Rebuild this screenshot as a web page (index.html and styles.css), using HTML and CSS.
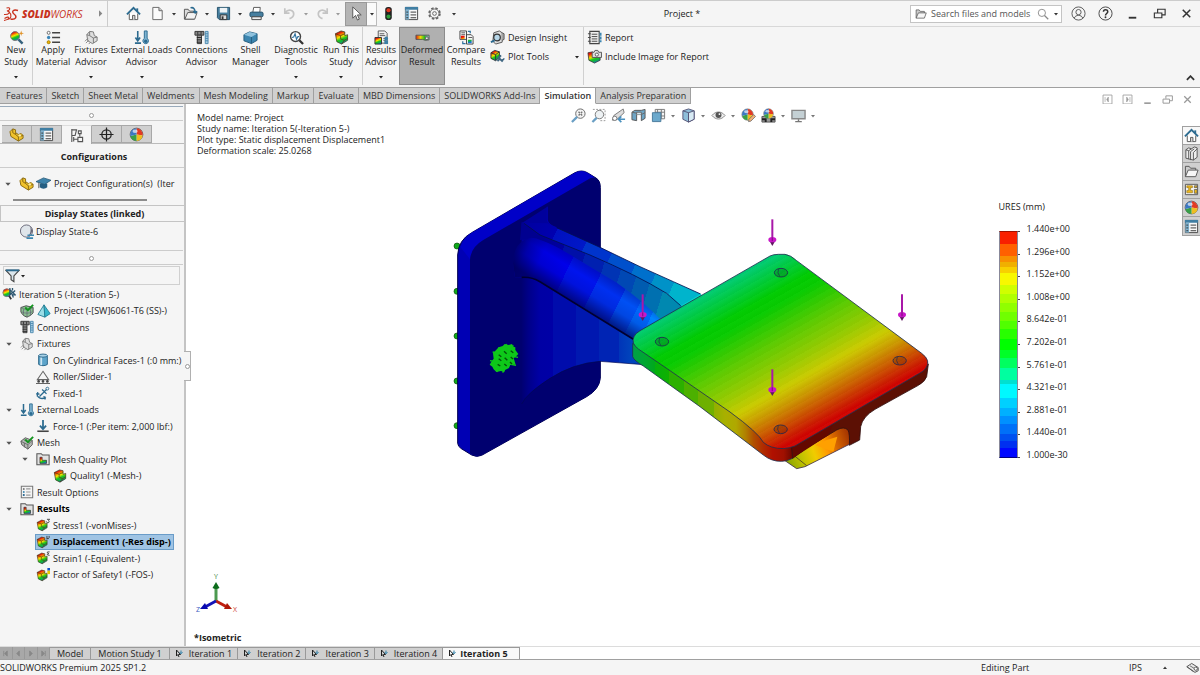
FILE: index.html
```html
<!DOCTYPE html>
<html lang="en">
<head>
<meta charset="utf-8">
<title>Project - SOLIDWORKS</title>
<link rel="stylesheet" href="styles.css">
</head>
<body>
<svg class="defs" aria-hidden="true">
  <defs>
    <linearGradient id="rain" x1=".2" y1="0" x2=".6" y2="1"><stop offset=".15" stop-color="#e8140c"/><stop offset=".32" stop-color="#f58a00"/><stop offset=".46" stop-color="#f2e600"/><stop offset=".66" stop-color="#18c420"/><stop offset=".82" stop-color="#10b048"/><stop offset="1" stop-color="#1470d8"/></linearGradient>
    <linearGradient id="rainx"><stop offset="0" stop-color="#e81c10"/><stop offset=".35" stop-color="#f2d600"/><stop offset=".65" stop-color="#2cc420"/><stop offset="1" stop-color="#9cd8e8"/></linearGradient>
    <symbol id="caret" viewBox="0 0 6 6"><path d="M1 2h4L3 4.400z" fill="currentColor"/></symbol>
    <symbol id="home" viewBox="0 0 16 16"><path d="M3.500 8v6.500h9V8" fill="#fff" stroke="#555"/><path d="M7 14.500V10h2.500v4.500" fill="#ddd" stroke="#555"/><path d="M1 9l7-7 7 7" fill="none" stroke="#2b6a8f" stroke-width="2"/><path d="M12 2.500v3" stroke="#2b6a8f" stroke-width="2"/></symbol>
    <symbol id="doc" viewBox="0 0 16 16"><path d="M3 1.500h6.500L13 5v9.500H3z" fill="#fbfbfb" stroke="#666"/><path d="M9.500 1.500V5H13" fill="#ccc" stroke="#666"/></symbol>
    <symbol id="open" viewBox="0 0 16 16"><path d="M1.500 14V3.500h4l1.500 2h5V14z" fill="#ddd" stroke="#555"/><path d="M2 14l3-7h10l-2.500 7z" fill="#f3f3f3" stroke="#555"/><path d="M8 2c3-1 5 1 5 5m-2-1.500l2 2 2-2" fill="none" stroke="#2b6a8f" stroke-width="1.600"/></symbol>
    <symbol id="save" viewBox="0 0 16 16"><path d="M1.500 1.500h13v13h-11l-2-2z" fill="#477f9f" stroke="#24506a"/><path d="M4 2h8v5H4z" fill="#eef3f6"/><path d="M4.500 9.500h7v5h-7z" fill="#ddd" stroke="#333"/><path d="M6 11h2v3H6z" fill="#333"/></symbol>
    <symbol id="print" viewBox="0 0 16 16"><path d="M4 7l1-5.500h7L11.500 7" fill="#fff" stroke="#555"/><rect x="1" y="6.500" width="14" height="5" rx="1.500" fill="#477f9f" stroke="#24506a"/><path d="M3 11.500h10v3H3z" fill="#eee" stroke="#444"/></symbol>
    <symbol id="undo" viewBox="0 0 16 16"><path d="M3 2.500v5h5M3.500 7c3-4 9-3 9 1.500 0 2-1.500 4-4.500 5" fill="none" stroke="#c4c4c4" stroke-width="1.800"/></symbol>
    <symbol id="redo" viewBox="0 0 16 16"><path d="M13 2.500v5H8M12.500 7c-3-4-9-3-9 1.500 0 2 1.500 4 4.500 5" fill="none" stroke="#c4c4c4" stroke-width="1.800"/></symbol>
    <symbol id="cursor" viewBox="0 0 16 16"><path d="M4 1v12l3-3 2 5 2-1-2-4.500h4z" fill="#fff" stroke="#555"/></symbol>
    <symbol id="traffic" viewBox="0 0 16 16"><rect x="4.500" y="1" width="7" height="14" rx="3" fill="#222"/><circle cx="8" cy="4.500" r="2.200" fill="#e2361c"/><circle cx="8" cy="11.300" r="2.200" fill="#2ca03a"/></symbol>
    <symbol id="props" viewBox="0 0 16 16"><path d="M1.500 1.500h13v13h-13z" fill="#f8f8f8" stroke="#444"/><path d="M1 1h14v3H1z" fill="#3f7ea3"/><path d="M1.500 4h4v10.500h-4z" fill="#7fb2cf"/><path d="M2.500 6.500h2m-2 3h2m-2 3h2m2.500-6h6m-6 3h6m-6 3h6" stroke="#333"/></symbol>
    <symbol id="gear" viewBox="0 0 16 16"><circle cx="8" cy="8" r="5.800" fill="none" stroke="#666" stroke-width="1.800" stroke-dasharray="2.600 2"/><circle cx="8" cy="8" r="4.800" fill="#f5f5f5" stroke="#666"/><circle cx="8" cy="8" r="2" fill="none" stroke="#666"/></symbol>
    <symbol id="mag" viewBox="0 0 16 16"><circle cx="6.500" cy="6.500" r="4.800" fill="none" stroke="#888" stroke-width="1.200"/><path d="M10 10L15 15" stroke="#888" stroke-width="1.600"/></symbol>
    <symbol id="user" viewBox="0 0 16 16"><circle cx="8" cy="8" r="7" fill="none" stroke="#555"/><circle cx="8" cy="6.500" r="2.800" fill="none" stroke="#555"/><path d="M3.500 13c1-4 8-4 9 0" fill="none" stroke="#555"/></symbol>
    <symbol id="help" viewBox="0 0 16 16"><circle cx="8" cy="8" r="7" fill="none" stroke="#444"/><path d="M5.800 6.200c0-3 4.600-3 4.600-.200C10.400 8 8 8 8 10" fill="none" stroke="#333" stroke-width="1.600"/><circle cx="8" cy="12" r="1" fill="#333"/></symbol>
    <symbol id="min" viewBox="0 0 16 16"><path d="M4 12.500h8" stroke="currentColor" stroke-width="2"/></symbol>
    <symbol id="restore" viewBox="0 0 16 16"><path d="M2.500 7.500h8v5h-8zM6 7V3.500h8v6h-3" fill="none" stroke="currentColor" stroke-width="1.200"/></symbol>
    <symbol id="close" viewBox="0 0 16 16"><path d="M4 4l8 8m0-8l-8 8" stroke="currentColor" stroke-width="1.600"/></symbol>
    <symbol id="paneL" viewBox="0 0 16 16"><path d="M2.500 2.500h11v11h-11z" fill="none" stroke="currentColor"/><path d="M5 5v6m4-6v6L7 8z" stroke="currentColor" fill="currentColor" stroke-width=".8"/></symbol>
    <symbol id="paneR" viewBox="0 0 16 16"><path d="M2.500 2.500h11v11h-11z" fill="none" stroke="currentColor"/><path d="M11 5v6M7 5v6l2-3z" stroke="currentColor" fill="currentColor" stroke-width=".8"/></symbol>
    <symbol id="folder" viewBox="0 0 16 16"><path d="M1.500 13.500v-11h4l1.500 2h5.500v2.500" fill="#ccc" stroke="#555"/><path d="M1.500 13.500l3-7h10.500l-2.500 7z" fill="#f6f6f6" stroke="#555"/></symbol>
    <symbol id="study" viewBox="0 0 16 16"><circle cx="6.500" cy="6.500" r="4.800" fill="url(#rain)" stroke="#777"/><path d="M10 10l4.500 4.500" stroke="#35617c" stroke-width="2.600"/><path d="M13 .500l.7 2.300 2.300.7-2.300.7-.7 2.300-.7-2.300-2.300-.7 2.300-.7z" fill="#e0932a"/></symbol>
    <symbol id="studytree" viewBox="0 0 16 16"><circle cx="5.500" cy="6.500" r="4.500" fill="url(#rain)" stroke="#777"/><path d="M8 10l2.500 4" stroke="#333" stroke-width="2"/><path d="M9 1v8l2-2 2 5M9 3l6 6h-4M12 1v3M15 4l-2 2" fill="none" stroke="#2b5570" stroke-width="1.500"/></symbol>
    <symbol id="material" viewBox="0 0 16 16"><path d="M6.500 3h8.500M6.500 8h8.500M6.500 13h8.500" stroke="#444" stroke-width="1.500"/><circle cx="2.800" cy="3" r="1.600" fill="#fff" stroke="#666"/><circle cx="2.800" cy="8" r="1.800" fill="#3b86b8"/><circle cx="2.800" cy="13" r="1.600" fill="#f0b800" stroke="#a67c00"/></symbol>
    <symbol id="fixture" viewBox="0 0 16 16"><path d="M3 5l3-3.500 4 .500 1 4 3 1.500v4l-5 3-5-3z" fill="#dedede" stroke="#777"/><path d="M6 2v4l4 2.500 4-1M6 6L3 5m7 3.500V14" fill="none" stroke="#777"/><path d="M1 12l3-3m-2 5l3-3m0 4l2-2" stroke="#888"/></symbol>
    <symbol id="loads" viewBox="0 0 16 16"><path d="M4 1v10M1.500 8L4 11.500 6.500 8M1 14h6.500" fill="none" stroke="#2b6a8f" stroke-width="1.700"/><path d="M11 1h3v8a3 3 0 11-3 0z" fill="#7fb4d2" stroke="#2b6a8f"/><circle cx="12.500" cy="12" r="1.800" fill="#2b6a8f"/></symbol>
    <symbol id="bolt" viewBox="0 0 16 16"><path d="M1 1.500h9.500v4H1z" fill="#888" stroke="#333"/><path d="M4 2v3m3.500-3v3" stroke="#333"/><path d="M3.500 5.500h4.500v9H3.500z" fill="#999" stroke="#333"/><path d="M3 8h5m-5 2.500h5m-5 2.500h5" stroke="#222"/><path d="M12 1.500h3v13h-3zM12 4h3m-3 2.500h3M12 9h3m-3 2.500h3" fill="#a9cfe4" stroke="#4a88ae"/></symbol>
    <symbol id="shell" viewBox="0 0 16 16"><path d="M1 5l6-3 8 2v7l-6 3.500-8-3z" fill="#3c86b0" stroke="#245b7c"/><path d="M1 5l8 2.500L15 4 7 2z" fill="#8fc2de"/><path d="M9 7.500v7" stroke="#245b7c"/></symbol>
    <symbol id="diag" viewBox="0 0 16 16"><circle cx="7" cy="7" r="5.300" fill="#fff" stroke="#444" stroke-width="1.500"/><path d="M3 8l2-.500L6.500 4 8 10l1.500-3H11" fill="none" stroke="#3173a0" stroke-width="1.200"/><path d="M11 11l4 4" stroke="#333" stroke-width="2.400"/></symbol>
    <symbol id="cube" viewBox="0 0 16 16"><path d="M1.500 4l6-3 4 1v4l3-1v6l-6.500 4L3 12.500z" fill="url(#rain)" stroke="#3a3a1a" stroke-width=".8"/><path d="M1.500 4l5.500 2 4.500-2M7 6v3.500l4 1.500 3.500-2M11 11l-3 4" fill="none" stroke="#5a3a10" stroke-width=".8"/></symbol>
    <symbol id="resadv" viewBox="0 0 16 16"><path d="M4.500 1h7L14 3.500V14H4.500z" fill="#f2f2f2" stroke="#555"/><path d="M6 4h5M6 6h6M10 9h3m-3 2h3" stroke="#555"/><path d="M1 8h7v7H1z" fill="url(#rain)" stroke="#333"/><circle cx="13" cy="9" r="2" fill="#3c7fa5"/><path d="M11 15v-4h4v4z" fill="#3c7fa5"/></symbol>
    <symbol id="deformed" viewBox="0 0 16 16"><path d="M1 5.500h14v5l-4 .500-3-1-7 0z" fill="url(#rainx)" stroke="#555"/><path d="M11 7.500h3v2.500h-3z" fill="#fff" stroke="#555"/></symbol>
    <symbol id="compare" viewBox="0 0 16 16"><path d="M1 1h7v9H1zM8 5h5l2 2v8H8z" fill="#f6f6f6" stroke="#444"/><path d="M2.500 3h4m-4 2h4M10 8h4" stroke="#555"/><path d="M2 6h4v3.500H2zM9.500 10.500h4v3.500h-4z" fill="url(#rain)"/><path d="M4 12v2.500h3M12 3.500V1.500H9.500" fill="none" stroke="#3173a0" stroke-width="1.300"/></symbol>
    <symbol id="insight" viewBox="0 0 16 16"><path d="M4 3l6-2 3 2v10l-7 2-3-3z" fill="#ddd" stroke="#555"/><circle cx="7.500" cy="8" r="3.500" fill="#b6d6e8" stroke="#333" stroke-width="1.300"/><path d="M1 13l4-2" stroke="#2b6a8f" stroke-width="2"/><path d="M13 3l2 1v6l-2 1" fill="#aaa" stroke="#555"/></symbol>
    <symbol id="plottools" viewBox="0 0 16 16"><path d="M1 4l4-2.500 5 1.500v6l-4 3.500-5-2.500z" fill="url(#rain)" stroke="#333"/><path d="M1 4l5 2 4-3M6 6v6" fill="none" stroke="#333"/><path d="M8.500 8.500l5 5M12 7a2.500 2.500 0 103 3M8 13l3-3" fill="none" stroke="#3d6580" stroke-width="1.800"/></symbol>
    <symbol id="report" viewBox="0 0 16 16"><path d="M3 1.500h10v13H3z" fill="#eee" stroke="#444" stroke-width="1.200"/><path d="M5 4.500h6M5 7h6M5 9.500h6M5 12h6M1 4h3M1 8h3m-3 4h3" stroke="#444"/><path d="M14.500 3v3m0 1v3m0 1v2" stroke="#3c86b0" stroke-width="2"/></symbol>
    <symbol id="include" viewBox="0 0 16 16"><path d="M1 4l5-1v5l8 1v3l-6 3-6-3z" fill="url(#rain)" stroke="#333" stroke-width=".8"/><path d="M5.500 3.500h2l1-2h3l1 2h3v5.500h-10z" fill="#ddd" stroke="#555"/><circle cx="10.500" cy="6" r="1.700" fill="#fff" stroke="#555"/></symbol>
    <symbol id="zoomfit" viewBox="0 0 16 16"><circle cx="10" cy="6" r="5" fill="#f4f4f4" stroke="#666"/><path d="M8 4l4 4m0-4L8 8" stroke="#777" stroke-width="1.500" stroke-dasharray="2 1.500"/><path d="M6.500 9.500L1 15" stroke="#6a9fc4" stroke-width="2.400"/></symbol>
    <symbol id="zoomarea" viewBox="0 0 16 16"><path d="M2 1.500h13v12H9" fill="none" stroke="#999" stroke-dasharray="2 1.500"/><circle cx="9" cy="7" r="4.500" fill="#eef2f4" stroke="#777"/><path d="M6 10.500L1.500 15" stroke="#6a9fc4" stroke-width="2.400"/></symbol>
    <symbol id="prevview" viewBox="0 0 16 16"><path d="M13 1L3 8l-1.500 5L6 12.500 14 5z" fill="#ddd" stroke="#777"/><circle cx="4" cy="11" r="2.300" fill="#fff" stroke="#777"/><path d="M15 12H8.500m2.500-3l-3 3 3 3" fill="none" stroke="#4b90bd" stroke-width="1.800"/></symbol>
    <symbol id="section" viewBox="0 0 16 16"><path d="M1 4.500l3-2h7l4-1v9.500l-4 2.500V7H6v6.500l-5-1z" fill="#6fa6c6" stroke="#555"/><path d="M6 7V4.500h5V7m0 0l4-2M1 4.500l5 1" fill="#d8e8f0" stroke="#666"/></symbol>
    <symbol id="orient" viewBox="0 0 16 16"><path d="M4.500 1.500h10v10h-10zM7 1.500v10M11 1.500v10M4.500 4.500h10m-10 4h10" fill="#f4f4f4" stroke="#777"/><path d="M1.500 5h9v9.500h-9z" fill="#6ca9cc" stroke="#47799a"/></symbol>
    <symbol id="style" viewBox="0 0 16 16"><path d="M2 3l6-2 6 2v9l-6 3-6-3z" fill="#8fbfda" stroke="#557"/><path d="M8 5l6-2v9l-6 3z" fill="#d7eaf4" stroke="#557"/><path d="M2 3l6 2v10" fill="none" stroke="#557"/></symbol>
    <symbol id="eye" viewBox="0 0 16 16"><path d="M1 8c4-5 10-5 14 0-4 5-10 5-14 0z" fill="#eee" stroke="#888"/><circle cx="8" cy="7.500" r="3.200" fill="#555"/><circle cx="9" cy="6.500" r="1" fill="#fff"/></symbol>
    <symbol id="ball" viewBox="0 0 16 16"><circle cx="8" cy="8" r="6.800" fill="#eee" stroke="#666"/><path d="M8 8V1.200A6.800 6.800 0 0114.600 9z" fill="#e23a24"/><path d="M8 8l6.600 1A6.800 6.800 0 018 14.800z" fill="#eebd20"/><path d="M8 8v6.800A6.800 6.800 0 011.500 9.500z" fill="#38a048"/><path d="M8 8l-6.500 1.500A6.800 6.800 0 018 1.200z" fill="#3b78c4"/><ellipse cx="6.500" cy="4.500" rx="2.800" ry="1.800" fill="#fff" opacity=".65"/></symbol>
    <symbol id="scene" viewBox="0 0 16 16"><path d="M1 9h14v6H1z" fill="#999" stroke="#555"/><path d="M1 12h4v3m6 0v-3h4" stroke="#222" stroke-width="2" fill="none"/><use href="#ball" x="2" y="0" width="12" height="12"/></symbol>
    <symbol id="appear" viewBox="0 0 16 16"><use href="#ball" x="0" y="0" width="14" height="14"/><path d="M8 14.500l.5-2.500 5-5 2 2-5 5z" fill="#f0b27a" stroke="#666" stroke-width=".8"/></symbol>
    <symbol id="monitor" viewBox="0 0 16 16"><path d="M1 2.500h14v9H1z" fill="#c4d0d4" stroke="#888" stroke-width="1.500"/><path d="M8 12v2M4.500 14.500h7" stroke="#777" stroke-width="1.500"/></symbol>
    <symbol id="part" viewBox="0 0 16 16"><path d="M1 5l3-3 3 1v3l3 2 3-1 2 2v3l-5 3L2 10z" fill="#f0c22c" stroke="#8a6a10"/><path d="M4 2v4l3 2v-2M7 8l3 2.500 5-1.500M10 10.500V15" fill="none" stroke="#8a6a10"/><circle cx="11.500" cy="9" r="1.300" fill="#fff0a0"/></symbol>
    <symbol id="config" viewBox="0 0 16 16"><path d="M3 1v14M3 2h5l-1.500 6H3M10 3h3v3h-3zm1.500 3v3M9.500 10h5v4.500h-5zM5 9.500v5M5 12h4.500" fill="none" stroke="#555" stroke-width="1.200"/></symbol>
    <symbol id="target" viewBox="0 0 16 16"><circle cx="8" cy="8" r="5" fill="none" stroke="#222" stroke-width="1.300"/><path d="M8 .500v15M.500 8h15" stroke="#222" stroke-width="1.300"/></symbol>
    <symbol id="cap" viewBox="0 0 16 16"><path d="M4 8v4c2 2 6 2 8 0V8" fill="#255f83"/><path d="M0 6l8-4 8 2.500L9 9z" fill="#3d83ab" stroke="#235473" stroke-width=".8"/><path d="M3 7v6" stroke="#555"/></symbol>
    <symbol id="dstate" viewBox="0 0 16 16"><circle cx="8" cy="7.500" r="6.500" fill="#dfe5ea" stroke="#667"/><path d="M12 3a6 6 0 01-2 10c2-3 3-6 2-10z" fill="#667"/><path d="M9 12h7M8 15h7" stroke="#3c86b0" stroke-width="1.800"/></symbol>
    <symbol id="funnel" viewBox="0 0 16 16"><path d="M1 2.500h14L9.500 8.500v6l-3-2v-4z" fill="#dbe6ec" stroke="#444" stroke-width="1.200"/><path d="M1 2.500h14" stroke="#2b6a8f" stroke-width="2"/></symbol>
    <symbol id="solid" viewBox="0 0 16 16"><path d="M1 4l6-2 8 2v6c-2 3-5 4-7 5-4-1-6-4-7-6z" fill="#8cbf92" stroke="#444"/><path d="M1 4c5 3 9 3 14 0M4 6v6m4-5v8m4-9v7M2 9c4 2 8 2 12 0" fill="none" stroke="#667" stroke-width=".8"/><path d="M6 4l3 3 6-6" fill="none" stroke="#14931f" stroke-width="2.200"/></symbol>
    <symbol id="tet" viewBox="0 0 16 16"><path d="M8 1L1 12l8 3z" fill="#9adde6" stroke="#237d93"/><path d="M8 1l7 10-6 4z" fill="#36b5ca" stroke="#237d93"/></symbol>
    <symbol id="cyl" viewBox="0 0 16 16"><path d="M3 3v10c2 2 8 2 10 0V3" fill="#5da4ca" stroke="#235f82"/><path d="M5 4v10h2V4z" fill="#cfe6f2"/><ellipse cx="8" cy="3" rx="5" ry="1.800" fill="#a8d2e8" stroke="#235f82"/></symbol>
    <symbol id="roller" viewBox="0 0 16 16"><path d="M8 1.500l6.500 9.500h-13z" fill="#f4f4f4" stroke="#666" stroke-width="1.200"/><circle cx="3" cy="13" r="1.500" fill="#444"/><circle cx="8" cy="13" r="1.500" fill="#444"/><circle cx="13" cy="13" r="1.500" fill="#444"/><path d="M0 15.500h16" stroke="#444"/></symbol>
    <symbol id="anchor" viewBox="0 0 16 16"><path d="M12 4L4 12M7 4l5 5M2 7l-.500 5M1 8c0 5 5 8 10 5m0 0l-2.500-1m2.500 1l-1 2.500M1 8l3 1.500" fill="none" stroke="#2b6a8f" stroke-width="1.500"/><circle cx="13" cy="3" r="1.600" fill="none" stroke="#2b6a8f"/></symbol>
    <symbol id="force" viewBox="0 0 16 16"><path d="M8 1v10M4.500 7.500L8 11.500l3.500-4" fill="none" stroke="#2b6a8f" stroke-width="2"/><path d="M1.500 14h13" stroke="#444" stroke-width="1.800"/></symbol>
    <symbol id="mesh" viewBox="0 0 16 16"><path d="M1 6l5-4 8 3v5l-5 5-7-5z" fill="#b4b8b4" stroke="#555"/><path d="M1 6l8 4 5-5M9 10v5M4 4l7 4M5 8v5" fill="none" stroke="#666"/><path d="M6 4l3 3 6-6" fill="none" stroke="#14931f" stroke-width="2.200"/></symbol>
    <symbol id="fplot" viewBox="0 0 16 16"><path d="M1 14.500V2h5l1.500 1.500H15v11z" fill="#e2e2e2" stroke="#555" stroke-width="1.200"/><path d="M4.500 6h2.500v3.500h5V13H4.500z" fill="url(#rain)" stroke="#333" stroke-width=".8"/></symbol>
    <symbol id="options" viewBox="0 0 16 16"><path d="M1.500 1.500h13v13h-13z" fill="#f4f4f4" stroke="#777" stroke-width="1.200"/><path d="M7 4.500h5M7 8h5m-5 3.500h5" stroke="#999" stroke-width="1.300"/><circle cx="4.300" cy="4.500" r="1.100" fill="#777"/><circle cx="4.300" cy="8" r="1.100" fill="#3c86b0"/><circle cx="4.300" cy="11.500" r="1.200" fill="#1d5f8a"/></symbol>
    <symbol id="library" viewBox="0 0 16 16"><path d="M2 4l3-2 3 1 3-2 3 1v10l-4 3-8-2z" fill="#eee" stroke="#555"/><path d="M2 4l3 1v9M5 5l3-2m-1 3v9M7 6l4-3m-1 4v8M10 7l4-4" fill="none" stroke="#555"/></symbol>
    <symbol id="viewpal" viewBox="0 0 16 16"><path d="M1.500 2.500h13v11h-13z" fill="#f6f6f6" stroke="#555"/><path d="M3 4h6v2H7v3h2v2.500H3V9h2V6H3z" fill="#eeb81c" stroke="#8a6a10" stroke-width=".6"/><path d="M11 8h3v4h-3zM11 4h3v2h-3z" fill="#eeb81c" stroke="#555" stroke-width=".8"/></symbol>
    <symbol id="tabstudy" viewBox="0 0 16 16"><path d="M3 1v12l3-3 2 5M3 1l8 9H7" fill="none" stroke="#222" stroke-width="2"/><path d="M12 2v6M9.500 5.500L12 8.500l3-3" fill="none" stroke="#2b7fa8" stroke-width="2"/></symbol>
    <symbol id="tag" viewBox="0 0 16 16"><path d="M1 7l6-4 8 5v4l-4 2z" fill="#e8e8e8" stroke="#555" stroke-width="1.200"/><path d="M1 7l8 6M5 6l5 3" stroke="#555"/><circle cx="12" cy="9.500" r="2" fill="#fff" stroke="#444"/></symbol>
  </defs>
</svg>

<header class="titlebar">
  <a class="brand" href="#" aria-label="SOLIDWORKS">
    <svg class="ds" viewBox="0 0 32 32" aria-hidden="true"><path d="M7 4c8-2 9 3 1 6 8 0 5 8-6 7" fill="none" stroke="#c8321e" stroke-width="2.200"/><path d="M3 25c10-7 13 1-1 4M12 12c6 5 5 14-3 15" fill="none" stroke="#c8321e" stroke-width="2.200"/><path d="M30 9c-9-3-14 2-8 7 7 5 4 12-7 10" fill="none" stroke="#c8321e" stroke-width="2.800"/></svg>
    <span class="word"><b>SOLID</b>WORKS</span>
  </a>
  <button class="flyout" aria-label="Menu"><svg viewBox="0 0 6 10"><path d="M0 0l5 5-5 5z" fill="#888"/></svg></button>
  <div class="quick">
    <button class="q home" aria-label="Home"><svg class="i"><use href="#home"/></svg></button>
    <button class="q" aria-label="New"><svg class="i"><use href="#doc"/></svg></button><button class="dd" aria-label="New options"><svg><use href="#caret"/></svg></button>
    <button class="q" aria-label="Open"><svg class="i"><use href="#open"/></svg></button><button class="dd" aria-label="Open options"><svg><use href="#caret"/></svg></button>
    <button class="q" aria-label="Save"><svg class="i"><use href="#save"/></svg></button><button class="dd" aria-label="Save options"><svg><use href="#caret"/></svg></button>
    <button class="q" aria-label="Print"><svg class="i"><use href="#print"/></svg></button><button class="dd" aria-label="Print options"><svg><use href="#caret"/></svg></button>
    <button class="q" aria-label="Undo"><svg class="i"><use href="#undo"/></svg></button><button class="dd off" aria-label="Undo options"><svg><use href="#caret"/></svg></button>
    <button class="q" aria-label="Redo"><svg class="i"><use href="#redo"/></svg></button><button class="dd off last" aria-label="Redo options"><svg><use href="#caret"/></svg></button>
    <button class="q pick" aria-label="Select"><svg class="i"><use href="#cursor"/></svg></button><button class="dd boxed" aria-label="Select options"><svg><use href="#caret"/></svg></button>
    <button class="q wide" aria-label="Rebuild"><svg class="i"><use href="#traffic"/></svg></button>
    <button class="q wide" aria-label="File properties"><svg class="i"><use href="#props"/></svg></button>
    <button class="q wide" aria-label="Options"><svg class="i"><use href="#gear"/></svg></button><button class="dd" aria-label="More options"><svg><use href="#caret"/></svg></button>
  </div>
  <h1>Project *</h1>
  <div class="search">
    <svg class="i"><use href="#folder"/></svg>
    <input type="search" aria-label="Search files and models" placeholder="Search files and models">
    <button aria-label="Search"><svg class="i"><use href="#mag"/></svg></button>
    <button class="dd" aria-label="Search options"><svg><use href="#caret"/></svg></button>
  </div>
  <div class="window">
    <button aria-label="Account"><svg><use href="#user"/></svg></button>
    <button aria-label="Help"><svg><use href="#help"/></svg></button>
    <button aria-label="Minimize"><svg><use href="#min"/></svg></button>
    <button aria-label="Restore"><svg><use href="#restore"/></svg></button>
    <button aria-label="Close"><svg><use href="#close"/></svg></button>
  </div>
</header>

<div class="ribbon">
  <button class="cmd sep"><svg class="i"><use href="#study"/></svg><span>New<br>Study</span><svg class="c"><use href="#caret"/></svg></button>
  <button class="cmd"><svg class="i"><use href="#material"/></svg><span>Apply<br>Material</span></button>
  <button class="cmd"><svg class="i"><use href="#fixture"/></svg><span>Fixtures<br>Advisor</span><svg class="c"><use href="#caret"/></svg></button>
  <button class="cmd"><svg class="i"><use href="#loads"/></svg><span>External Loads<br>Advisor</span><svg class="c"><use href="#caret"/></svg></button>
  <button class="cmd"><svg class="i"><use href="#bolt"/></svg><span>Connections<br>Advisor</span><svg class="c"><use href="#caret"/></svg></button>
  <button class="cmd"><svg class="i"><use href="#shell"/></svg><span>Shell<br>Manager</span></button>
  <button class="cmd"><svg class="i"><use href="#diag"/></svg><span>Diagnostic<br>Tools</span><svg class="c"><use href="#caret"/></svg></button>
  <button class="cmd sep"><svg class="i"><use href="#cube"/></svg><span>Run This<br>Study</span><svg class="c"><use href="#caret"/></svg></button>
  <button class="cmd"><svg class="i"><use href="#resadv"/></svg><span>Results<br>Advisor</span><svg class="c"><use href="#caret"/></svg></button>
  <button class="cmd on"><svg class="i"><use href="#deformed"/></svg><span>Deformed<br>Result</span></button>
  <button class="cmd"><svg class="i"><use href="#compare"/></svg><span>Compare<br>Results</span></button>
  <div class="stack sep">
    <button><svg class="i"><use href="#insight"/></svg>Design Insight</button>
    <button><svg class="i"><use href="#plottools"/></svg>Plot Tools<svg class="c"><use href="#caret"/></svg></button>
  </div>
  <div class="stack">
    <button><svg class="i"><use href="#report"/></svg>Report</button>
    <button><svg class="i"><use href="#include"/></svg>Include Image for Report</button>
  </div>
  <button class="fold" aria-label="Collapse ribbon"><svg viewBox="0 0 10 6"><path d="M1 5l4-4 4 4" fill="none" stroke="#333" stroke-width="2"/></svg></button>
</div>

<nav class="tabs">
  <button>Features</button><button>Sketch</button><button>Sheet Metal</button><button>Weldments</button><button>Mesh Modeling</button><button>Markup</button><button>Evaluate</button><button>MBD Dimensions</button><button>SOLIDWORKS Add-Ins</button><button class="on">Simulation</button><button>Analysis Preparation</button>
  <div class="docwin">
    <button aria-label="Expand left"><svg><use href="#paneL"/></svg></button>
    <button aria-label="Expand right"><svg><use href="#paneR"/></svg></button>
    <button aria-label="Minimize document"><svg><use href="#min"/></svg></button>
    <button aria-label="Restore document"><svg><use href="#restore"/></svg></button>
    <button aria-label="Close document"><svg><use href="#close"/></svg></button>
  </div>
</nav>

<main>
  <aside>
    <div class="grip top"><i></i></div>
    <div class="ptabs">
      <button aria-label="Feature tree"><svg class="i"><use href="#part"/></svg></button>
      <button aria-label="Properties"><svg class="i"><use href="#props"/></svg></button>
      <button class="on" aria-label="Configurations"><svg class="i"><use href="#config"/></svg></button>
      <button aria-label="Dimensions"><svg class="i"><use href="#target"/></svg></button>
      <button aria-label="Display manager"><svg class="i"><use href="#ball"/></svg></button>
    </div>
    <h2>Configurations</h2>
    <div class="configrow"><button class="ex" aria-label="Collapse"><svg><use href="#caret"/></svg></button><svg class="i"><use href="#part"/></svg><svg class="i"><use href="#cap"/></svg><span>Project Configuration(s)&nbsp; (Iter</span></div>
    <div class="scroll"></div>
    <h2 class="boxed">Display States (linked)</h2>
    <div class="state"><svg class="i"><use href="#dstate"/></svg>Display State-6</div>
    <div class="grip"><i></i></div>
    <label class="filter"><svg class="i"><use href="#funnel"/></svg><svg class="c"><use href="#caret"/></svg><input type="text" aria-label="Filter"></label>
    <ul class="tree">
      <li class="l0"><span><svg class="i"><use href="#studytree"/></svg>Iteration 5 (-Iteration 5-)</span></li>
      <li class="l1"><span><svg class="i"><use href="#solid"/></svg><svg class="i"><use href="#tet"/></svg>Project (-[SW]6061-T6 (SS)-)</span></li>
      <li class="l1"><span><svg class="i"><use href="#bolt"/></svg>Connections</span></li>
      <li class="l1"><button class="ex" aria-label="Collapse Fixtures"><svg><use href="#caret"/></svg></button><span><svg class="i"><use href="#fixture"/></svg>Fixtures</span></li>
      <li class="l2"><span><svg class="i"><use href="#cyl"/></svg>On Cylindrical Faces-1 (:0 mm:)</span></li>
      <li class="l2"><span><svg class="i"><use href="#roller"/></svg>Roller/Slider-1</span></li>
      <li class="l2"><span><svg class="i"><use href="#anchor"/></svg>Fixed-1</span></li>
      <li class="l1"><button class="ex" aria-label="Collapse External Loads"><svg><use href="#caret"/></svg></button><span><svg class="i"><use href="#loads"/></svg>External Loads</span></li>
      <li class="l2"><span><svg class="i"><use href="#force"/></svg>Force-1 (:Per item: 2,000 lbf:)</span></li>
      <li class="l1"><button class="ex" aria-label="Collapse Mesh"><svg><use href="#caret"/></svg></button><span><svg class="i"><use href="#mesh"/></svg>Mesh</span></li>
      <li class="l2"><button class="ex" aria-label="Collapse Mesh Quality Plot"><svg><use href="#caret"/></svg></button><span><svg class="i"><use href="#fplot"/></svg>Mesh Quality Plot</span></li>
      <li class="l3"><span><svg class="i"><use href="#cube"/></svg>Quality1 (-Mesh-)</span></li>
      <li class="l1"><span><svg class="i"><use href="#options"/></svg>Result Options</span></li>
      <li class="l1 bold"><button class="ex" aria-label="Collapse Results"><svg><use href="#caret"/></svg></button><span><svg class="i"><use href="#fplot"/></svg>Results</span></li>
      <li class="l2"><span><svg class="i" viewBox="0 0 16 16"><use href="#cube" y="1" width="14" height="15"/><path d="M12 4a1.500 1.500 0 102-1.500M12.500 1.500H16" fill="none" stroke="#333"/></svg>Stress1 (-vonMises-)</span></li>
      <li class="l2 bold sel"><span><svg class="i" viewBox="0 0 16 16"><use href="#cube" y="1" width="14" height="15"/><path d="M12.500 1v4m0-1q2 1 2.500-1V1" fill="none" stroke="#333"/></svg>Displacement1 (-Res disp-)</span></li>
      <li class="l2"><span><svg class="i" viewBox="0 0 16 16"><use href="#cube" y="1" width="14" height="15"/><path d="M15.500 1q-5 0-1 2-4 1 1 2" fill="none" stroke="#333"/></svg>Strain1 (-Equivalent-)</span></li>
      <li class="l2"><span><svg class="i" viewBox="0 0 16 16"><use href="#cube" y="1" width="14" height="15"/><path d="M13 0h3v3h-3z" fill="#1450c8"/><path d="M13 3h3v4h-3z" fill="#e8c800"/></svg>Factor of Safety1 (-FOS-)</span></li>
    </ul>
    <button class="flap" aria-label="Hide panel"><i></i></button>
  </aside>

  <section class="view">
    <svg class="model" viewBox="186 104 1014 542" role="img" aria-label="Displacement plot of the bracket">
      <defs>
        <linearGradient id="gTop" gradientUnits="userSpaceOnUse" x1="255" y1="190" x2="760" y2="430">
          <stop offset="0" stop-color="#0000a0"/><stop offset=".17" stop-color="#0000b0"/><stop offset=".17" stop-color="#0010c0"/><stop offset=".34" stop-color="#0018c8"/><stop offset=".34" stop-color="#0034cc"/><stop offset=".49" stop-color="#0034cc"/><stop offset=".49" stop-color="#0050cc"/><stop offset=".63" stop-color="#0050cc"/><stop offset=".63" stop-color="#0070cc"/><stop offset=".75" stop-color="#0070cc"/><stop offset=".75" stop-color="#0092c8"/><stop offset=".86" stop-color="#0092c8"/><stop offset=".86" stop-color="#00b4cc"/></linearGradient>
        <linearGradient id="gSide" gradientUnits="userSpaceOnUse" x1="290" y1="250" x2="720" y2="380">
          <stop offset="0" stop-color="#000090"/><stop offset=".18" stop-color="#0000a0"/><stop offset=".18" stop-color="#0010a8"/><stop offset=".33" stop-color="#0010a8"/><stop offset=".33" stop-color="#0020b0"/><stop offset=".47" stop-color="#0020b0"/><stop offset=".47" stop-color="#0034b4"/><stop offset=".59" stop-color="#0034b4"/><stop offset=".59" stop-color="#0048b4"/><stop offset=".7" stop-color="#0048b4"/><stop offset=".7" stop-color="#005cb0"/><stop offset=".8" stop-color="#005cb0"/><stop offset=".8" stop-color="#0070b0"/><stop offset=".9" stop-color="#0070b0"/><stop offset=".9" stop-color="#0088b0"/></linearGradient>
        <linearGradient id="gTube" gradientUnits="userSpaceOnUse" x1="220" y1="290" x2="650" y2="500">
          <stop offset="0" stop-color="#000080"/><stop offset=".06" stop-color="#0000b0"/><stop offset=".16" stop-color="#0000e0"/><stop offset=".34" stop-color="#0000ec"/><stop offset=".34" stop-color="#0014ee"/><stop offset=".54" stop-color="#0014ee"/><stop offset=".54" stop-color="#0030f0"/><stop offset=".72" stop-color="#0030f0"/><stop offset=".72" stop-color="#0050f4"/><stop offset=".84" stop-color="#0050f4"/><stop offset=".84" stop-color="#0068fa"/><stop offset=".94" stop-color="#0068fa"/><stop offset=".94" stop-color="#0084ff"/></linearGradient>
        <linearGradient id="gShade" gradientUnits="userSpaceOnUse" x1="465" y1="325" x2="400" y2="430"><stop offset="0" stop-color="#000070" stop-opacity=".35"/><stop offset=".3" stop-color="#000060" stop-opacity="0"/><stop offset=".6" stop-color="#000060" stop-opacity=".12"/><stop offset="1" stop-color="#000050" stop-opacity=".75"/></linearGradient>
        <linearGradient id="gWeb" gradientUnits="userSpaceOnUse" x1="243" y1="500" x2="610" y2="500">
          <stop offset="0" stop-color="#00006f"/><stop offset=".06" stop-color="#000088"/><stop offset=".15" stop-color="#0000a4"/><stop offset=".26" stop-color="#0000a6"/><stop offset=".26" stop-color="#000cac"/><stop offset=".45" stop-color="#000cac"/><stop offset=".45" stop-color="#0018b0"/><stop offset=".64" stop-color="#0018b0"/><stop offset=".64" stop-color="#0024b4"/><stop offset=".8" stop-color="#0024b4"/><stop offset=".8" stop-color="#0034b8"/><stop offset=".9" stop-color="#0044bc"/></linearGradient>
        <linearGradient id="gPlate" gradientUnits="userSpaceOnUse" x1="166" y1="297" x2="418" y2="749">
          <stop offset="0" stop-color="#00cc78"/><stop offset=".1" stop-color="#00cc3c"/><stop offset=".2" stop-color="#00cc00"/><stop offset=".27" stop-color="#08cc00"/><stop offset=".45" stop-color="#5ccc00"/><stop offset=".6" stop-color="#98cc00"/><stop offset=".71" stop-color="#cccc00"/><stop offset=".79" stop-color="#cc9c00"/><stop offset=".88" stop-color="#cc5c00"/><stop offset=".96" stop-color="#cc2000"/><stop offset="1" stop-color="#d00400"/></linearGradient>
        <linearGradient id="gBand" gradientUnits="userSpaceOnUse" spreadMethod="repeat" x1="0" y1="0" x2="9" y2="16"><stop offset="0" stop-color="#fff" stop-opacity=".02"/><stop offset="1" stop-color="#000" stop-opacity=".02"/></linearGradient>
        <linearGradient id="gEdge" gradientUnits="userSpaceOnUse" x1="38" y1="0" x2="515" y2="0">
          <stop offset="0" stop-color="#00a048"/><stop offset=".08" stop-color="#00a830"/><stop offset=".14" stop-color="#00a81c"/><stop offset=".14" stop-color="#04b00c"/><stop offset=".23" stop-color="#10b000"/><stop offset=".23" stop-color="#2cb000"/><stop offset=".32" stop-color="#2cb000"/><stop offset=".32" stop-color="#4cb000"/><stop offset=".41" stop-color="#4cb000"/><stop offset=".41" stop-color="#6cb000"/><stop offset=".51" stop-color="#70b000"/><stop offset=".51" stop-color="#90b000"/><stop offset=".58" stop-color="#a8b000"/><stop offset=".65" stop-color="#b0a800"/><stop offset=".71" stop-color="#b08000"/><stop offset=".76" stop-color="#b05000"/><stop offset=".82" stop-color="#b02c00"/><stop offset=".88" stop-color="#b01000"/><stop offset=".95" stop-color="#a01000"/><stop offset="1" stop-color="#700800"/></linearGradient>
        <linearGradient id="gBoss" gradientUnits="userSpaceOnUse" x1="500" y1="740" x2="690" y2="670"><stop offset="0" stop-color="#90a800"/><stop offset=".22" stop-color="#c4c400"/><stop offset=".4" stop-color="#f0cc00"/><stop offset=".6" stop-color="#ff9800"/><stop offset=".74" stop-color="#d86800"/><stop offset="1" stop-color="#a03000"/></linearGradient>
        <g id="load"><path d="M0 0v58" stroke="#a818a8" stroke-width="6"/><path d="M-9 64L0 80 9 64z" fill="#601860"/><ellipse cx="0" cy="61" rx="12" ry="8" fill="#c818c8"/><path d="M0 54v12" stroke="#901090" stroke-width="4"/></g>
        <g id="hole"><ellipse rx="20" ry="13" fill="#000" fill-opacity=".16" stroke="#202850" stroke-width="2.500"/><path d="M-7 -11q-6 11 3 22" fill="none" stroke="#202850" stroke-width="2"/></g>
      </defs>
      <svg x="440" y="160" width="260" height="310" viewBox="0 0 780 930" overflow="visible">
        <g fill="#10a818" stroke="#044a08" stroke-width="2"><circle cx="51" cy="258" r="9"/><circle cx="51" cy="394" r="9"/><circle cx="51" cy="528" r="9"/><circle cx="51" cy="663" r="9"/><circle cx="51" cy="797" r="9"/></g>
        <path d="M53 850V285Q55 240 95 218L405 38Q425 28 442 38L468 54Q481 62 481 82V655Q478 688 440 710L125 886Q110 893 95 885L64 866Q54 860 53 850z" fill="#0000b4" stroke="#000050" stroke-width="3"/>
        <path d="M62 262Q70 232 95 218L405 38Q425 28 442 38L462 50 130 240Q95 262 90 298z" fill="#0000c8"/>
        <path d="M90 880V300Q92 262 130 240L452 54Q480 48 480 82V655Q478 688 440 709L125 885Q108 892 90 880z" fill="#00006f"/>
        <path d="M245 190L322 140V180Q325 195 350 203L300 300 245 260z" fill="#00009c"/>
        <path d="M322 140V180Q325 195 350 203" fill="none" stroke="#0000c0" stroke-width="2"/>
        <path d="M243 350L290 356 590 535V590L612 614 480 604Q400 610 330 655T245 732z" fill="url(#gWeb)"/>
        <path d="M612 614L480 604Q400 610 330 655T245 732" fill="none" stroke="#000850" stroke-width="2"/>
        <path d="M245 185L310 225 450 283 600 350 680 400 740 450 640 510 600 450 450 340 290 235 240 240z" fill="url(#gSide)"/>
        <path d="M252 188L322 190 350 203 480 262 600 320 700 365 782 402 792 420 740 450 722 437 680 400Q590 345 450 285L300 225z" fill="url(#gTop)"/>
        <path d="M350 203L480 262 600 320 700 365 782 402M252 190L300 225 450 285Q590 345 680 400L722 437" fill="none" stroke="#001050" stroke-width="2.500"/>
        <path d="M728 437L782 405 786 412 740 440z" fill="#00e0c8" stroke="#00e0c8" stroke-width="4"/>
        <path d="M219 310Q222 240 275 233 320 240 400 290L530 368Q620 430 672 490L580 540 450 455 290 358Q250 350 225 352z" fill="url(#gTube)"/>
        <path d="M219 310Q222 240 275 233 320 240 400 290L530 368Q620 430 672 490L580 540 450 455 290 358Q250 350 225 352z" fill="url(#gShade)"/>
        <path d="M245 352Q275 350 300 365L580 538" fill="none" stroke="#000030" stroke-width="5"/>
        <path d="M176 562l12 -4 6 -6 12 3 10 -3 4 8 6 2 0 8 9 12 -8 8 -6 4 6 20 -16 0 -4 10 -12 6 -2 6 -10 -3 -14 3 -8 -8 -4 -8 -8 -6 6 -10 6 -8 -2 -16 z" fill="#0ec81a"/>
        <path d="M158 576l76 16M150 602l78 14M170 636l50-80M188 638l30-60M176 562l14 60M198 552l12 60" stroke="#0ec81a" stroke-width="4"/>
        <path d="M176 584l8 6m8-16l8 7m12-9l8 6m-44 18l8 6m10-9l8 8m10-10l7 6m-46 16l8 5m12-6l7 6m10-12l6 6" stroke="#04500a" stroke-width="4"/>
      </svg>
      <svg x="620" y="210" width="320" height="270" viewBox="0 0 960 810" overflow="visible">
        <path d="M495 752L530 776 555 770 690 702V650L600 640z" fill="url(#gBoss)" stroke="#403050" stroke-width="2.500"/>
        <path d="M524 738L560 767" stroke="#504020" stroke-width="2.500"/>
        <path d="M585 705L640 725 652 680 620 690z" fill="#ffa000"/>
        <path d="M38 400V440Q42 452 70 468L240 590 430 735Q455 755 485 754 500 754 518 745V700L300 560z" fill="url(#gEdge)" stroke="#203050" stroke-width="2.500"/>
        <path d="M515 712L925 462 920 500Q915 515 895 526L765 598Q728 620 722 650L719 690 688 706Q690 672 684 660 672 648 650 660L560 714 518 745z" fill="#5c1004" stroke="#301010" stroke-width="2.500"/>
        <path d="M518 712L640 640 625 676 518 745z" fill="#640800"/>
        <path d="M60 362L450 138Q460 133 475 133H495Q512 135 530 152L905 430Q934 452 918 474 912 484 895 492L525 708Q490 722 455 711 440 706 430 697 415 668 330 606L150 482 55 417Q32 400 42 380 46 370 60 362z" fill="url(#gPlate)"/>
        <path d="M60 362L450 138Q460 133 475 133H495Q512 135 530 152L905 430Q934 452 918 474 912 484 895 492L525 708Q490 722 455 711 440 706 430 697 415 668 330 606L150 482 55 417Q32 400 42 380 46 370 60 362z" fill="url(#gBand)" stroke="#203050" stroke-width="2.500"/>
        <use href="#hole" x="483" y="188"/><use href="#hole" x="126" y="395"/><use href="#hole" x="839" y="452"/><use href="#hole" x="482" y="658"/>
        <use href="#load" x="457" y="28"/><use href="#load" x="68" y="253"/><use href="#load" x="846" y="253"/><use href="#load" x="457" y="478"/>
      </svg>
    </svg>

    <div class="hud">
      <button aria-label="Zoom to fit"><svg class="i"><use href="#zoomfit"/></svg></button>
      <button aria-label="Zoom to area"><svg class="i"><use href="#zoomarea"/></svg></button>
      <button aria-label="Previous view"><svg class="i"><use href="#prevview"/></svg></button>
      <button aria-label="Section view"><svg class="i"><use href="#section"/></svg></button>
      <button aria-label="View orientation"><svg class="i"><use href="#orient"/></svg><svg class="c"><use href="#caret"/></svg></button>
      <button aria-label="Display style"><svg class="i"><use href="#style"/></svg><svg class="c"><use href="#caret"/></svg></button>
      <button aria-label="Hide or show items"><svg class="i"><use href="#eye"/></svg><svg class="c"><use href="#caret"/></svg></button>
      <button aria-label="Edit appearance"><svg class="i"><use href="#appear"/></svg></button>
      <button aria-label="Apply scene"><svg class="i"><use href="#scene"/></svg><svg class="c"><use href="#caret"/></svg></button>
      <button aria-label="View settings"><svg class="i"><use href="#monitor"/></svg><svg class="c"><use href="#caret"/></svg></button>
    </div>
    <p class="info">Model name: Project<br>Study name: Iteration 5(-Iteration 5-)<br>Plot type: Static displacement Displacement1<br>Deformation scale: 25.0268</p>
    <div class="legend">
      <h3>URES (mm)</h3>
      <div class="scale">
        <div class="bar"></div>
        <div class="ticks"><i></i><i></i><i></i><i></i><i></i><i></i><i></i><i></i><i></i><i></i><i></i></div>
        <ol><li>1.440e+00</li><li>1.296e+00</li><li>1.152e+00</li><li>1.008e+00</li><li>8.642e-01</li><li>7.202e-01</li><li>5.761e-01</li><li>4.321e-01</li><li>2.881e-01</li><li>1.440e-01</li><li>1.000e-30</li></ol>
      </div>
    </div>
    <div class="orientation">
      <svg viewBox="0 0 48 48" aria-hidden="true">
        <path d="M22 30V16" stroke="#4c9a50" stroke-width="3"/><path d="M18.500 17L22 11l3.500 6q-3.500 2-7 0z" fill="#0c6c1c"/>
        <path d="M22 30l11 6" stroke="#c02010" stroke-width="3"/><path d="M30 38l3-6 5 6z" fill="#b01808"/>
        <path d="M22 30l-11 6" stroke="#1414b8" stroke-width="3"/><path d="M14 38l-3-6-5 6z" fill="#0808b0"/>
        <text x="20" y="8" fill="#3c8a40">Y</text><text x="39" y="41" fill="#d04838">X</text><text x="2" y="41" fill="#3c5cc0">Z</text>
      </svg>
      <b>*Isometric</b>
    </div>
    <nav class="taskpane">
      <button class="on" aria-label="Home"><svg class="i"><use href="#home"/></svg></button>
      <button aria-label="Design library"><svg class="i"><use href="#library"/></svg></button>
      <button aria-label="File explorer"><svg class="i"><use href="#folder"/></svg></button>
      <button aria-label="View palette"><svg class="i"><use href="#viewpal"/></svg></button>
      <button aria-label="Appearances"><svg class="i"><use href="#ball"/></svg></button>
      <button aria-label="Custom properties"><svg class="i"><use href="#props"/></svg></button>
    </nav>
  </section>
</main>

<nav class="sheets">
  <div class="nav">
    <button aria-label="First"><svg viewBox="0 0 8 8"><path d="M2 1v6M6 1v6L3 4z"/></svg></button><button aria-label="Previous"><svg viewBox="0 0 8 8"><path d="M5 1v6L2 4z"/></svg></button><button aria-label="Next"><svg viewBox="0 0 8 8"><path d="M3 1v6l3-3z"/></svg></button><button aria-label="Last"><svg viewBox="0 0 8 8"><path d="M6 1v6M2 1v6l3-3z"/></svg></button>
  </div>
  <button class="plain">Model</button>
  <button class="plain">Motion Study 1</button>
  <button><svg><use href="#tabstudy"/></svg>Iteration 1</button>
  <button><svg><use href="#tabstudy"/></svg>Iteration 2</button>
  <button><svg><use href="#tabstudy"/></svg>Iteration 3</button>
  <button><svg><use href="#tabstudy"/></svg>Iteration 4</button>
  <button class="on"><svg><use href="#tabstudy"/></svg>Iteration 5</button>
</nav>
<footer>
  <span>SOLIDWORKS Premium 2025 SP1.2</span>
  <span class="mode">Editing Part</span>
  <button class="units">IPS<svg viewBox="0 0 6 6"><path d="M1 4h4L3 1.500z" fill="#333"/></svg></button>
  <svg class="i"><use href="#tag"/></svg>
</footer>
</body>
</html>
```

FILE: styles.css
```css
* { box-sizing: border-box; margin: 0; padding: 0; }
body {
  display: flex; flex-direction: column; height: 100vh; overflow: hidden;
  background: #f5f5f5; color: #222;
  font: 9px/11px "Open Sans", "Noto Sans", sans-serif;
}
button, input { font: inherit; color: inherit; background: none; border: 0; }
button { display: flex; align-items: center; justify-content: center; white-space: nowrap; }
svg { display: block; flex: none; }
ul, ol { list-style: none; }
.defs { position: absolute; width: 0; height: 0; }
.i { width: 15px; height: 15px; }
.c, .dd svg, .ex svg { width: 6px; height: 6px; }

.titlebar { display: flex; align-items: center; height: 27px; flex: none; border-top: 1px solid #ccc; border-bottom: 1px solid #d8d8d8; position: relative; }
.brand { display: flex; align-items: center; gap: 3px; width: 94px; padding-left: 3px; color: #c8321e; text-decoration: none; }
.ds { width: 16px; height: 16px; }
.word { font: italic 10px/14px "Open Sans", sans-serif; }
.word b { font-weight: 800; }
.flyout { width: 14px; height: 26px; border-right: 1px solid #ccc; }
.flyout svg { width: 4px; height: 7px; }
.quick { display: flex; padding-left: 17px; }
.q { width: 17px; height: 24px; }
.q.home { margin-right: 7px; }
.q.wide { width: 23px; }
.q.pick { width: 22px; background: #b4b4b4; border: 1px solid #999; }
.dd { width: 16px; color: #333; }
.dd.off { color: #999; }
.dd.last { width: 14px; }
.dd.boxed { width: 10px; border: 1px solid #bbb; border-left: 0; background: #fafafa; }
h1 { position: absolute; left: 0; right: 0; text-align: center; font-size: 9px; font-weight: 400; padding-left: 164px; pointer-events: none; }
.search { display: flex; align-items: center; width: 152px; height: 18px; margin-left: auto; margin-right: 7px; padding-left: 4px; gap: 2px; background: #fff; border: 1px solid #c4c4c4; }
.search .i { width: 12px; height: 12px; }
.search input { flex: 1; min-width: 0; padding-left: 2px; outline: 0; appearance: none; }
.search input::-webkit-search-cancel-button { display: none; }
.search input::placeholder { color: #555; opacity: 1; }
.search .dd { width: 10px; }
.window { display: flex; }
.window button { width: 27px; color: #333; }
.window button:first-child { width: 18px; margin-right: 5px; }
.window svg { width: 15px; height: 15px; }

.ribbon {
  display: grid; height: 61px; flex: none; border-bottom: 1px solid #a0a0a0;
  grid-template-columns: 33px 40px 36px 65px 55px 43px 48px 43px 36px 46px 42px 97px auto 1fr;
}
.cmd { flex-direction: column; justify-content: flex-start; padding-top: 3px; margin-bottom: 2px; }
.cmd span { line-height: 12px; margin-top: -1px; }
.cmd .c { margin-top: 6px; }
.sep { border-right: 1px solid #d0d0d0; }
.cmd.on { background: #b0b0b0; border: 1px solid #8c8c8c; padding-top: 2px; }
.stack { display: flex; flex-direction: column; gap: 4px; padding: 3px 3px 0; margin-bottom: 2px; }
.stack button { height: 15px; justify-content: flex-start; gap: 3px; }
.stack .c { margin-left: auto; }
.fold { align-items: flex-end; justify-self: end; padding: 0 5px 6px 0; }
.fold svg { width: 9px; height: 6px; }

.tabs { display: flex; height: 16px; flex: none; background: #fff; }
.tabs > button { padding: 0 4px; background: #d0d0d0; border: 1px solid #a0a0a0; border-width: 0 1px 1px 0; color: #333; }
.tabs > button:first-child { padding-left: 6px; }
.tabs > .on { background: #fff; border-bottom-color: #fff; font-weight: 600; }
.docwin { display: flex; align-items: center; margin-left: auto; padding: 7px 3px 0 0; }
.docwin button { width: 20px; color: #999; }
.docwin svg { width: 13px; height: 13px; }

main { display: flex; flex: 1; min-height: 0; }
aside { position: relative; width: 186px; flex: none; border-right: 2px solid #c4c4c4; }
.grip { height: 15px; margin: 0 1px 1px 0; border-top: 1px solid #ccc; border-bottom: 1px solid #ccc; padding-top: 5px; }
.grip.top { margin-top: 2px; margin-bottom: 4px; border-top: 1px solid #9ab; padding-top: 6px; }
.grip i, .flap i { display: block; width: 5px; height: 5px; margin: 0 auto; border: 1px solid #999; border-radius: 50%; background: #fff; }
.ptabs { display: flex; height: 19px; padding-left: 2px; border-bottom: 1px solid #bbb; }
.ptabs button { width: 30px; background: #d0d0d0; border: 1px solid #a8a8a8; border-left: 0; }
.ptabs .on { background: #f5f5f5; border-bottom: 0; border-top-color: #ddd; margin-bottom: -1px; }
h2 { font-size: 9px; line-height: 25px; font-weight: 700; text-align: center; padding-left: 4px; border-bottom: 1px solid #ccc; height: 24px; }
.configrow { display: flex; align-items: center; gap: 2px; height: 31px; padding-left: 2px; white-space: nowrap; }
.configrow span { margin-left: 1px; }
.ex { width: 12px; margin-right: 5px; color: #555; }
.configrow .ex { margin-right: 3px; }
.ex svg { width: 8px; height: 8px; }
.scroll { height: 2px; margin: 0 37px 4px 13px; background: #8c8c8c; }
h2.boxed { height: 17px; line-height: 16px; border: 1px solid #c4c4c4; border-right: 0; }
.state { display: flex; align-items: center; gap: 2px; height: 19px; padding-left: 19px; margin-bottom: 9px; }
.filter { display: flex; align-items: center; height: 19px; margin: 0 4px 1px 3px; padding-left: 1px; border: 1px solid #d0d0d0; }
.filter input { flex: 1; min-width: 0; outline: 0; }
.tree li { display: flex; align-items: center; height: 16px; padding-left: 2px; white-space: nowrap; }
.tree li:nth-child(even) { height: 17px; }
.tree li > span { display: flex; align-items: center; gap: 3px; height: 16px; }
.tree .i { width: 14px; height: 14px; }
.tree .l1 { padding-left: 20px; }
.tree .l2 { padding-left: 36px; }
.tree .l3 { padding-left: 53px; }
.tree .ex { margin-left: -17px; }
.bold { font-weight: 700; color: #000; }
.tree .sel > span { margin-left: -1px; padding: 0 2px 0 0; background: #a0c4e4; border: 1px solid #6a9cc8; }
.flap { position: absolute; left: 184px; top: 247px; width: 7px; height: 30px; background: #f5f5f5; border: 1px solid #b0b0b0; border-left: 0; z-index: 2; }

.view { position: relative; flex: 1; min-width: 0; background: #fff; }
.model { width: 100%; height: 100%; }
.hud { position: absolute; top: 4px; left: 0; right: 0; display: flex; justify-content: center; gap: 5px; color: #777; }
.hud button { gap: 4px; }
.info { position: absolute; left: 11px; top: 8px; }
.legend { position: absolute; right: 130px; top: 97px; }
h3 { font-size: 9px; font-weight: 400; margin-bottom: 14px; }
.scale { display: flex; line-height: 11px; }
.bar {
  width: 19px; height: 227px; margin-top: 5px; border: 1px solid #889; border-top-color: #a01000; border-bottom-color: #000080;
  background: linear-gradient(#f82000 12px, #ff6000 12px 24px, #f89000 24px 30px, #f0b000 30px 35px, #f8d000 35px 41px, #f8f800 41px 53px, #d0ff00 53px 62px, #b0ff00 62px 71px, #90ff00 71px 80px, #70ff00 80px 89px, #50ff00 89px 97px, #28ff00 97px 107px, #00ff00 107px 118px, #00ff28 118px 126px, #00ff60 126px 136px, #00ffa0 136px 148px, #00e0d0 148px 152px, #00f8ff 152px 166px, #00d0ff 166px 176px, #00b0ff 176px 184px, #0090ff 184px 192px, #0070f8 192px 202px, #0050f0 202px 209px, #0030f0 209px 216px, #0008ff 216px);
}
.ticks { display: flex; flex-direction: column; justify-content: space-between; height: 227px; margin: 5px 7px 0 0; }
.ticks i { width: 2px; height: 1px; background: #444; }
.scale ol { display: flex; flex-direction: column; justify-content: space-between; height: 237px; margin-top: -3px; }
.orientation { position: absolute; left: 8px; bottom: 3px; }
.orientation svg { width: 48px; height: 48px; margin-bottom: 13px; }
.orientation text { font: 7px "Open Sans", sans-serif; }
.taskpane { position: absolute; right: 0; top: 22px; border: 1px solid #a0a0a0; border-right: 0; }
.taskpane button { width: 17px; height: 18px; background: #d0d0d0; border-bottom: 1px solid #a0a0a0; }
.taskpane button:last-child { border-bottom: 0; }
.taskpane .on { background: #f8f8f8; }

.sheets { display: flex; height: 14px; flex: none; background: #fff; border-top: 1px solid #dcdcdc; border-bottom: 1px solid #a0a0a0; }
.sheets > button { gap: 6px; padding: 0 5px; background: #d0d0d0; border-right: 1px solid #999; border-top: 1px solid #999; }
.sheets > .plain { padding: 0 7px; }
.sheets > button svg { width: 8px; height: 9px; }
.sheets > .on { background: #f8f8f8; font-weight: 700; padding: 0 11px 0 5px; gap: 4px; }
.nav { display: flex; width: 50px; background: #a8a8a8; }
.nav button { flex: 1; border-right: 1px solid #999; }
.nav svg { width: 7px; height: 7px; fill: #888; stroke: #888; }
footer { display: flex; align-items: center; height: 15px; flex: none; padding-right: 1px; }
.mode { margin-left: auto; width: 148px; }
.units { width: 57px; justify-content: flex-start; gap: 20px; }
.units svg { width: 6px; height: 6px; }
footer .i { width: 13px; height: 13px; }
```
